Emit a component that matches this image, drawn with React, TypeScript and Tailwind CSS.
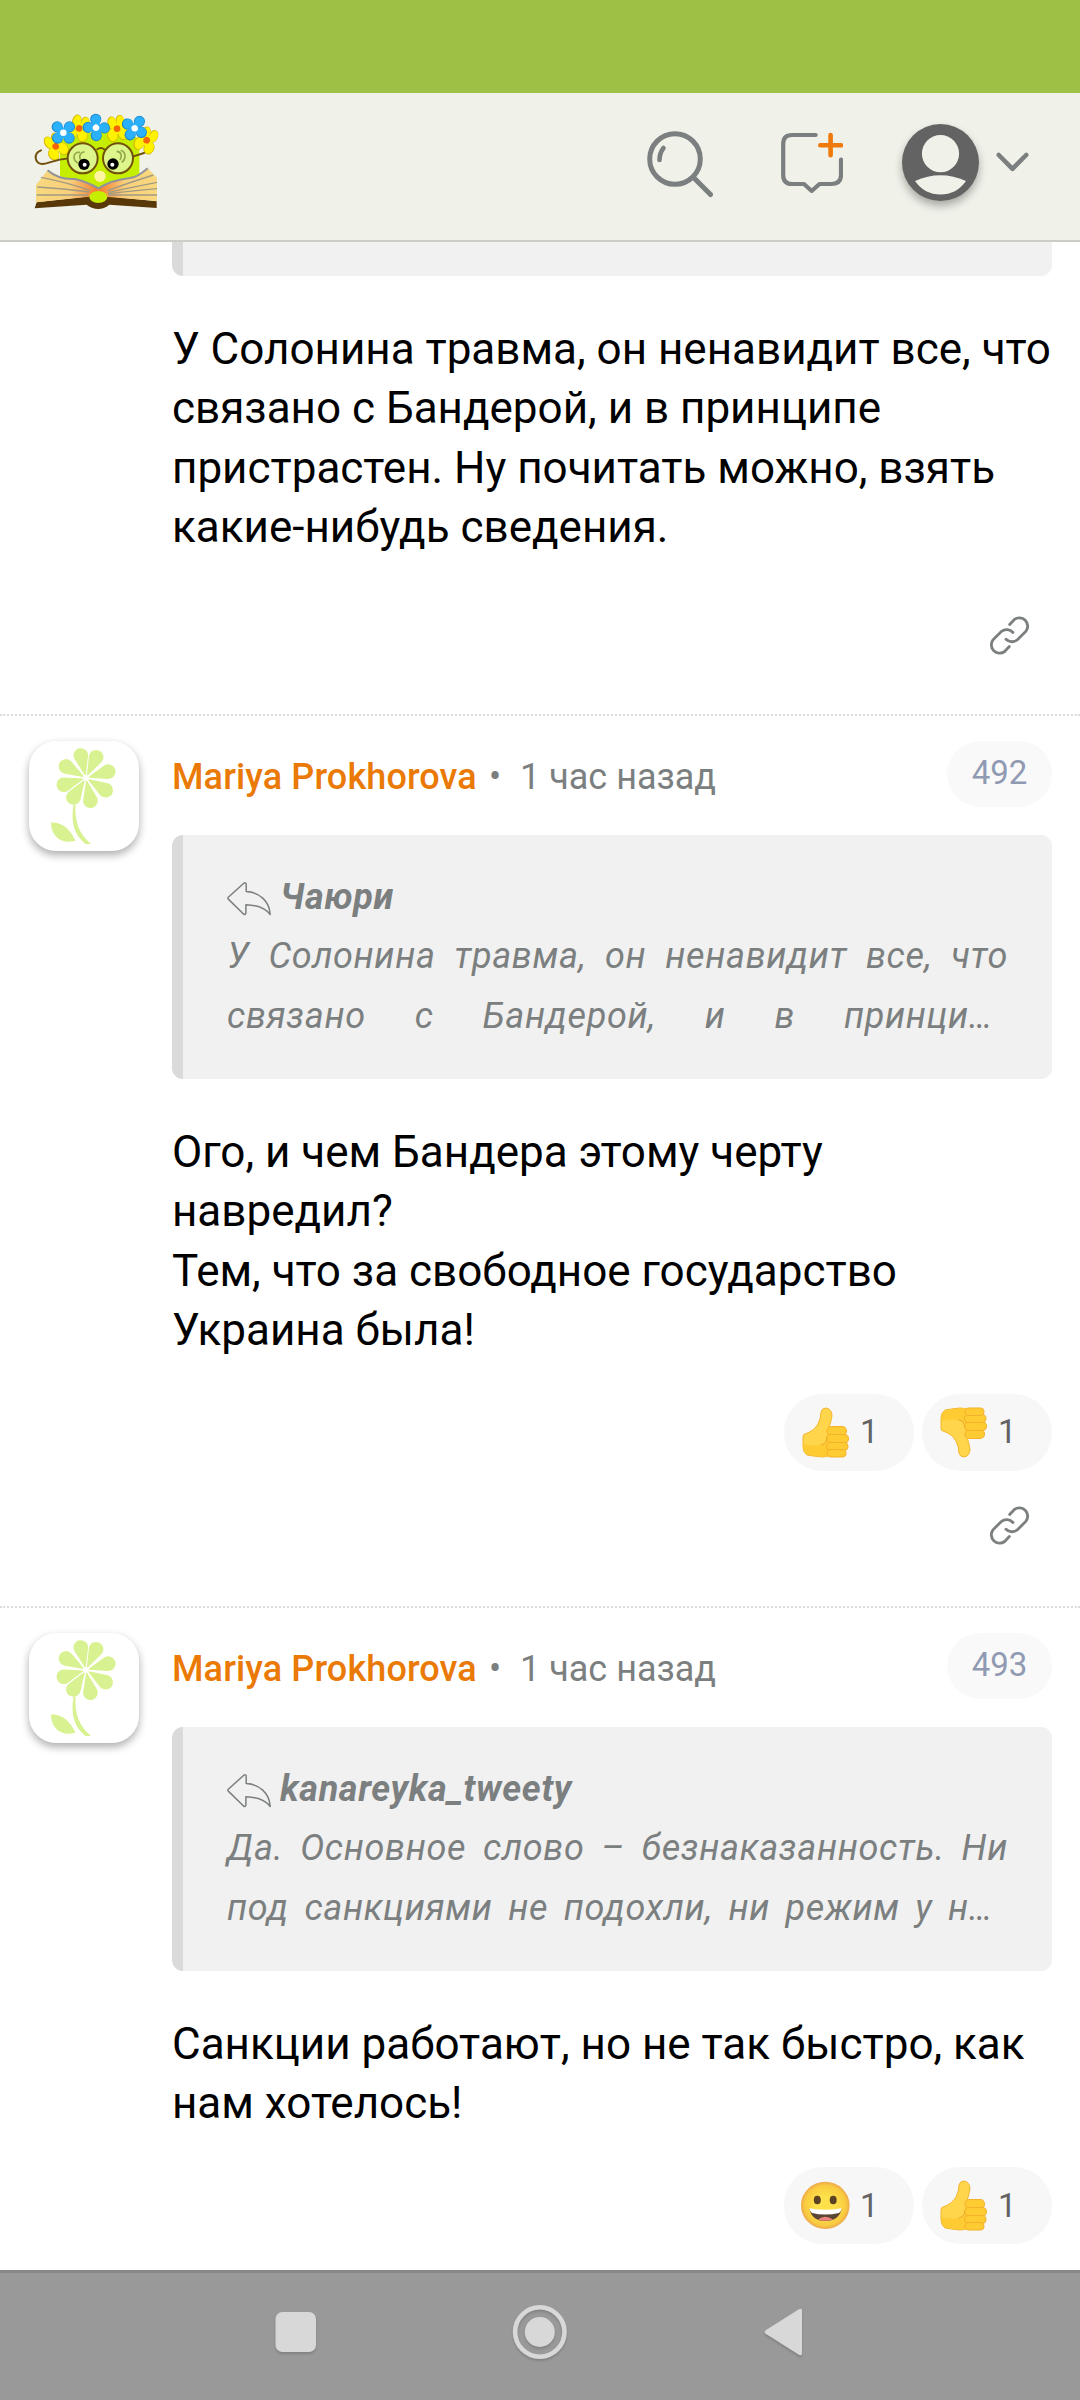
import React from 'react';

type ReactionKind = 'up' | 'down' | 'grin';

interface Comment {
  id: number;
  author: string;
  time: string;
  quoteAuthor: string;
  quoteFirst: string;
  quoteSecond: string;
  lines: string[];
  reactions: { kind: ReactionKind; count: number }[];
}

const comments: Comment[] = [
  {
    id: 492,
    author: 'Mariya Prokhorova',
    time: '1 час назад',
    quoteAuthor: 'Чаюри',
    quoteFirst: 'У Солонина травма, он ненавидит все, что',
    quoteSecond: 'связано с Бандерой, и в принци…',
    lines: ['Ого, и чем Бандера этому черту', 'навредил?', 'Тем, что за свободное государство', 'Украина была!'],
    reactions: [{ kind: 'up', count: 1 }, { kind: 'down', count: 1 }],
  },
  {
    id: 493,
    author: 'Mariya Prokhorova',
    time: '1 час назад',
    quoteAuthor: 'kanareyka_tweety',
    quoteFirst: 'Да. Основное слово – безнаказанность. Ни',
    quoteSecond: 'под санкциями не подохли, ни режим у н…',
    lines: ['Санкции работают, но не так быстро, как', 'нам хотелось!'],
    reactions: [{ kind: 'grin', count: 1 }, { kind: 'up', count: 1 }],
  },
];

const BlueFlower = ({ x, y, r = 0 }: { x: number; y: number; r?: number }) => (
  <g transform={`translate(${x} ${y}) rotate(${r}) scale(1.08)`}>
    <g fill="#1c86c9">
      <circle cx="-17" cy="-16" r="15.5" /><circle cx="17" cy="-16" r="15.5" />
      <circle cx="-16" cy="15" r="15.5" /><circle cx="16" cy="15" r="15.5" />
    </g>
    <g fill="#2bb0fb">
      <circle cx="-16" cy="-16" r="13.5" /><circle cx="17" cy="-16" r="13.5" />
      <circle cx="-15" cy="14" r="13.5" /><circle cx="16" cy="14" r="13.5" />
      <circle r="15" />
    </g>
    <circle r="9" fill="#fff" />
  </g>
);

const YellowFlower = ({ x, y, r = 0 }: { x: number; y: number; r?: number }) => (
  <g transform={`translate(${x} ${y}) rotate(${r})`}>
    <g fill="#d3b400">
      <ellipse cx="-12" cy="-19" rx="14" ry="20" /><ellipse cx="13" cy="-19" rx="14" ry="20" />
      <ellipse cx="-17" cy="18" rx="16" ry="20" /><ellipse cx="16" cy="18" rx="16" ry="20" />
    </g>
    <g fill="#fff200">
      <ellipse cx="-11" cy="-19" rx="12" ry="18" /><ellipse cx="14" cy="-19" rx="12" ry="18" />
      <ellipse cx="-16" cy="17" rx="14" ry="18" /><ellipse cx="16" cy="17" rx="14" ry="18" />
      <circle r="16" />
    </g>
    <circle r="10" fill="#f7650a" />
  </g>
);

const Logo = () => (
  <svg viewBox="0 0 480 390" className="h-[130px] w-[160px]" fill="none">
    <defs>
      <linearGradient id="pageL" x1="50" x2="235" y1="0" y2="0" gradientUnits="userSpaceOnUse">
        <stop offset="0" stopColor="#f9d97f" /><stop offset="0.55" stopColor="#f9cf7c" /><stop offset="1" stopColor="#f47a2c" />
      </linearGradient>
      <linearGradient id="pageR" x1="410" x2="235" y1="0" y2="0" gradientUnits="userSpaceOnUse">
        <stop offset="0" stopColor="#f9d97f" /><stop offset="0.55" stopColor="#f9cf7c" /><stop offset="1" stopColor="#f47a2c" />
      </linearGradient>
    </defs>
    <path d="M120 135 Q240 90 358 130 V250 L235 282 L120 250Z" fill="#c5ee00" />
    {/* book */}
    <path d="M50 322 L210 304 H262 L410 319 V339 L268 329 Q235 355 200 329 L44 340Z" fill="#583808" />
    <path d="M83 225 Q135 255 165 252 Q205 262 235 280 V304 L200 306 L48 322 V270 Z" fill="url(#pageL)" />
    <path d="M383 220 L411 248 V318 L265 306 L235 304 V280 Q275 255 330 249 Q350 249 383 220" fill="url(#pageR)" />
    <path d="M83 226 Q115 255 165 252 Q205 262 235 280 Q275 255 330 249 Q350 249 383 220" stroke="#90939c" strokeWidth="6" />
    <path d="M63 247 Q140 262 210 286 M52 276 Q130 280 208 291 M50 300 H205 M262 287 Q330 262 400 240 M265 292 Q330 278 411 262 M265 296 Q330 288 411 281 M265 300 H411" stroke="#a09b83" strokeWidth="4" />
    <ellipse cx="235" cy="306" rx="27" ry="18" fill="#c5ee00" />
    <circle cx="240" cy="244" r="17" fill="#fff5a0" />
    {/* wreath */}
    <YellowFlower x={107} y={154} r={-30} />
    <YellowFlower x={177} y={100} r={15} />
    <YellowFlower x={380} y={136} r={25} />
    <YellowFlower x={291} y={101} r={-10} />
    <BlueFlower x={130} y={113} />
    <BlueFlower x={344} y={100} r={-12} />
    <BlueFlower x={228} y={98} r={45} />
    {/* glasses */}
    <g stroke="#71500c" strokeWidth="6" strokeLinecap="round">
      <path d="M63 166 C39 175 43 208 69 207 C90 205 100 194 148 190 M232 163 Q242 155 254 164 M338 185 L372 174" />
      <circle cx="188" cy="190" r="45" fill="#dcf68b" />
      <circle cx="294" cy="190" r="45" fill="#dcf68b" />
    </g>
    <path d="M180 172 C160 170 155 194 174 204 M194 171 C179 170 175 188 184 196 M290 169 C305 170 307 185 300 195 M302 166 C321 173 317 194 305 202" stroke="#94a84b" strokeWidth="5" />
    <circle cx="192" cy="208" r="17" fill="#000" /><circle cx="194" cy="209" r="6" fill="#fff" />
    <circle cx="279" cy="207" r="17" fill="#000" /><circle cx="277" cy="209" r="6" fill="#fff" />
  </svg>
);

const SearchIcon = () => (
  <svg viewBox="0 0 66 67" className="h-[67px] w-[66px]" fill="none" stroke="#7b7f80" strokeWidth="5" strokeLinecap="round">
    <circle cx="28" cy="28" r="25.3" />
    <path d="M46.5 46.5 L63.5 63.5" />
    <path d="M16.5 17 Q12.5 22 12.5 29" strokeWidth="4.6" />
  </svg>
);

const NewCommentIcon = () => (
  <svg viewBox="0 0 62 64" className="h-[64px] w-[62px]" fill="none" strokeLinecap="round" strokeLinejoin="round" strokeWidth="4.2">
    <path d="M34.7 6 H11 Q2.2 6 2.2 15 V46 Q2.2 55 11 55 H23 L30.7 62 L38.5 55 H50 Q60 55 60 46 V30.5" stroke="#7b7f80" />
    <path d="M39.3 16.3 H60 M49.6 6 V26.3" stroke="#ee7a0b" strokeWidth="4.6" />
  </svg>
);

const UserIcon = () => (
  <div className="h-[77px] w-[77px] rounded-full bg-[#636363] shadow-[0_5px_8px_rgba(0,0,0,0.3)]">
    <svg viewBox="0 0 77 77" className="h-[77px] w-[77px]" fill="#f0f1e9">
      <circle cx="38.5" cy="29.7" r="18.6" />
      <path d="M13 57 Q38.5 45.5 64 57 Q54.5 70.5 38.5 70.5 Q22.5 70.5 13 57Z" />
    </svg>
  </div>
);

const LinkIcon = () => (
  <svg viewBox="0 0 123 122" className="h-[41px] w-[41px]" fill="none" stroke="#7b7f80" strokeWidth="8.5" strokeLinecap="round">
    <path d="M62 28 L76 13 A25 25 0 0 1 111 48 L86 73 A25 25 0 0 1 51 72" />
    <path d="M61 94 L47 109 A25 25 0 0 1 12 74 L37 49 A25 25 0 0 1 72 52" />
  </svg>
);

const ReplyIcon = () => (
  <svg viewBox="0 0 44 34" className="h-[34px] w-[44px] shrink-0" fill="none" stroke="#7b7f80" strokeWidth="1.5" strokeLinejoin="round">
    <path d="M1.3 15.3 Q0.5 16.2 1.3 17.1 L16.5 32 Q18.7 33.3 18.9 31 V22.7 C29 23 38 25.5 43.2 32.5 C42.5 19 32 10 19.2 9.6 V2 Q18.7 0.2 16.8 1.2Z" />
  </svg>
);

const Hand = () => (
  <>
    <path d="M3 27 Q12 24 16 17 Q19 11 19 5 Q20 1 24 1 Q30 2 30 9 Q29 16 26 23 L30 43 Q30 50 20 50 Q10 49 5 48 Q1 45 1 40 V30 Q1 27 3 27Z" fill="#ffd54b" stroke="#f3b72f" strokeWidth="1" />
    <path d="M1.5 37 Q16 41 25 35 L27 49.5 Q10 49.5 5 47 Q1 45 1.5 37Z" fill="#ffcb33" />
    <g fill="#ffcb33" stroke="#f3b22b" strokeWidth="1.1">
      <rect x="25" y="19.5" width="19.5" height="9" rx="4.5" />
      <rect x="24.5" y="27.5" width="22" height="8.5" rx="4.2" />
      <rect x="24.5" y="35.5" width="21.5" height="8" rx="4" />
      <rect x="25" y="42.5" width="19" height="7.5" rx="3.7" />
    </g>
    <path d="M19 38 Q24 37 25 31" fill="none" stroke="#eeae2b" strokeWidth="1.2" strokeLinecap="round" />
  </>
);

const Emoji = ({ kind }: { kind: ReactionKind }) => (
  <svg viewBox="0 0 49 51" className="h-[51px] w-[49px]">
    {kind === 'up' && <g transform="translate(1 0)"><Hand /></g>}
    {kind === 'down' && <g transform="translate(1 51) scale(1 -1)"><Hand /></g>}
    {kind === 'grin' && (
      <>
        <defs>
          <radialGradient id="face">
            <stop offset="0.4" stopColor="#fde04a" /><stop offset="0.85" stopColor="#f9cb40" /><stop offset="1" stopColor="#eda84c" />
          </radialGradient>
        </defs>
        <ellipse cx="24.3" cy="25.4" rx="24.3" ry="23.6" fill="url(#face)" />
        <ellipse cx="16.3" cy="20" rx="3.5" ry="4.3" fill="#5b4222" />
        <ellipse cx="32.2" cy="20" rx="3.5" ry="4.3" fill="#5b4222" />
        <path d="M8.5 29 Q24 32 40.5 29 Q38 41 24.3 41 Q11 41 8.5 29Z" fill="#5b4534" />
        <path d="M8.5 28.2 Q24 31.5 40.5 28.2 Q40.5 31 38 33 Q24 36 11 33 Q8.5 31 8.5 28.2Z" fill="#fff" />
        <path d="M17 39.5 Q24 34 32 39.5 Q24 42 17 39.5Z" fill="#f0827e" />
      </>
    )}
  </svg>
);

const petals = [-13, 26, 74, 122, 169, 213, 253, 300];

const Avatar = () => (
  <div className="h-[110px] w-[110px] rounded-[27px] bg-white shadow-[0_4px_8px_rgba(0,0,0,0.32)]">
    <svg viewBox="0 0 110 110" className="h-[110px] w-[110px]" fill="#d9f291">
      {petals.map(a => (
        <path key={a} transform={`translate(57 37) rotate(${a})`} d="M-0.5 -3 L-6.8 -20.5 A7.3 7.3 0 1 1 6.8 -20.5 L0.5 -3Z" />
      ))}
      <path d="M44.5 64 H46.5 C45.5 80 50 93 62 103 H56.5 C44 93 42 80 44.5 64Z" />
      <path d="M22 81.5 C33 81 41 88 46.5 99.7 C32 104 22 95 22 81.5Z" />
    </svg>
  </div>
);

const Message = ({ lines }: { lines: string[] }) => (
  <div className="pt-[44px] text-[44px] leading-[59.4px] whitespace-nowrap text-black">
    {lines.map(l => <p key={l}>{l}</p>)}
  </div>
);

const CommentRow = ({ comment }: { comment: Comment }) => (
  <article className="flex h-[892px] shrink-0 border-t-2 border-dotted border-[#dcdcdc] pt-[25px] pr-[28px] pl-[29px]">
    <div className="w-[143px] shrink-0">
      <Avatar />
    </div>
    <div className="flex w-[880px] flex-col">
      <div className="flex h-[94px] items-start justify-between">
        <div className="flex items-baseline pt-[13px] text-[36px] leading-[46px] text-[#7b7f80]">
          <span className="font-medium tracking-[0.12px] text-[#ea7906]">{comment.author}</span>
          <span className="ml-[12px]">•</span>
          <span className="ml-[19px]">{comment.time}</span>
        </div>
        <span className="flex h-[66px] w-[105px] justify-center rounded-[33px] bg-[#f9f9f9] pt-[12px] text-[33px] leading-[40px] text-[#909ab2]">
          {comment.id}
        </span>
      </div>
      <blockquote className="h-[244px] rounded-[11px] border-l-[11px] border-[#dadada] bg-[#f1f1f1] pt-[32px] pr-[44px] pl-[44px] text-[36px] leading-[60px] tracking-[0.65px] text-[#7b7f80] italic">
        <div className="flex h-[59px] items-center gap-[9px]">
          <span className="pt-[5px]"><ReplyIcon /></span>
          <b className="font-bold">{comment.quoteAuthor}</b>
        </div>
        <p className="[text-align-last:justify] whitespace-nowrap">{comment.quoteFirst}</p>
        <p className="w-[766px] [text-align-last:justify] whitespace-nowrap">{comment.quoteSecond}</p>
      </blockquote>
      <Message lines={comment.lines} />
      <div className="mt-[33px] flex justify-end gap-[8px]">
        {comment.reactions.map(r => (
          <span key={r.kind} className="flex h-[77px] w-[130px] items-center rounded-[38px] bg-[#f7f7f7] pl-[17px] text-[33px] text-[#636363]">
            <Emoji kind={r.kind} />
            <span className="ml-[10px]">{r.count}</span>
          </span>
        ))}
      </div>
      <div className="mt-[34px] flex justify-end pr-[22px]">
        <LinkIcon />
      </div>
    </div>
  </article>
);

const App: React.FC = () => (
  <div className="flex h-[2400px] w-[1080px] flex-col overflow-hidden bg-white font-['Roboto',sans-serif]">
    <div className="h-[93px] shrink-0 bg-[#9dc045]" />
    <header className="flex h-[149px] shrink-0 items-start border-b-2 border-[#cbcdc6] bg-[#f0f1e9] pl-[20px]">
      <div className="w-[627px] pt-[2px]"><Logo /></div>
      <div className="w-[134px] pt-[38px]"><SearchIcon /></div>
      <div className="w-[121px] pt-[36px]"><NewCommentIcon /></div>
      <div className="w-[94px] pt-[31px]"><UserIcon /></div>
      <svg viewBox="0 0 33 20" className="mt-[59px] h-[20px] w-[33px]" fill="none" stroke="#7b7f80" strokeWidth="4.6" strokeLinecap="round" strokeLinejoin="round">
        <path d="M2.8 3 L16.5 16.8 L30.2 3" />
      </svg>
    </header>

    <main className="flex min-h-0 flex-1 flex-col overflow-hidden">
      <article className="flex h-[472px] shrink-0 flex-col pr-[28px] pl-[172px]">
        <div className="h-[34px] rounded-b-[11px] border-l-[11px] border-[#dadada] bg-[#f1f1f1]" />
        <Message
          lines={[
            'У Солонина травма, он ненавидит все, что',
            'связано с Бандерой, и в принципе',
            'пристрастен. Ну почитать можно, взять',
            'какие-нибудь сведения.',
          ]}
        />
        <div className="mt-[57px] flex justify-end pr-[22px]"><LinkIcon /></div>
      </article>
      {comments.map(c => <CommentRow key={c.id} comment={c} />)}
    </main>

    <nav className="flex h-[130px] shrink-0 items-start border-t-[3px] border-[#888] bg-[#999]">
      <svg viewBox="0 0 1080 127" className="h-[127px] w-[1080px] [filter:drop-shadow(0_2px_1px_rgba(0,0,0,0.15))]" fill="#d8d8d8">
        <rect x="275.5" y="39" width="40.5" height="40" rx="7" />
        <circle cx="539.8" cy="59" r="24.7" fill="none" stroke="#d8d8d8" strokeWidth="4.6" />
        <circle cx="539.8" cy="59" r="15" />
        <path d="M765.3 57.5 L798.5 36.5 Q802 34.5 802 38 V80 Q802 83.5 798.5 81.5 L765.3 60.5 Q763.8 59 765.3 57.5Z" />
      </svg>
    </nav>
  </div>
);

export default App;
